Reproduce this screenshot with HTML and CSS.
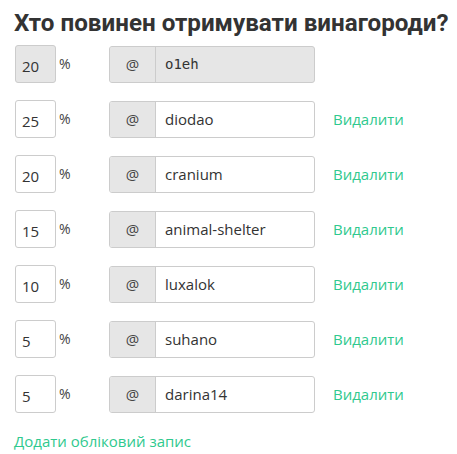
FILE: index.html
```html
<!DOCTYPE html>
<html>
<head>
<meta charset="utf-8">
<link rel="stylesheet" href="styles.css">
</head>
<body>
<div class="page">
  <h2 class="title">Хто повинен отримувати винагороди?</h2>
  <div class="rows">
    <div class="row">
      <input class="pct disabled" value="20" disabled>
      <span class="sign">%</span>
      <div class="group disabled">
        <span class="addon">@</span>
        <span class="name mono">o1eh</span>
      </div>
    </div>
    <div class="row">
      <input class="pct" value="25">
      <span class="sign">%</span>
      <div class="group">
        <span class="addon">@</span>
        <span class="name">diodao</span>
      </div>
      <a class="link del">Видалити</a>
    </div>
    <div class="row">
      <input class="pct" value="20">
      <span class="sign">%</span>
      <div class="group">
        <span class="addon">@</span>
        <span class="name">cranium</span>
      </div>
      <a class="link del">Видалити</a>
    </div>
    <div class="row">
      <input class="pct" value="15">
      <span class="sign">%</span>
      <div class="group">
        <span class="addon">@</span>
        <span class="name">animal-shelter</span>
      </div>
      <a class="link del">Видалити</a>
    </div>
    <div class="row">
      <input class="pct" value="10">
      <span class="sign">%</span>
      <div class="group">
        <span class="addon">@</span>
        <span class="name">luxalok</span>
      </div>
      <a class="link del">Видалити</a>
    </div>
    <div class="row">
      <input class="pct" value="5">
      <span class="sign">%</span>
      <div class="group">
        <span class="addon">@</span>
        <span class="name">suhano</span>
      </div>
      <a class="link del">Видалити</a>
    </div>
    <div class="row">
      <input class="pct" value="5">
      <span class="sign">%</span>
      <div class="group">
        <span class="addon">@</span>
        <span class="name">darina14</span>
      </div>
      <a class="link del">Видалити</a>
    </div>
  </div>
  <a class="link add">Додати обліковий запис</a>
</div>
</body>
</html>
```
FILE: styles.css
```css
* { box-sizing: border-box; }
body {
  margin: 0;
  background: #fff;
  font-family: "Open Sans", "Noto Sans", sans-serif;
  color: #333;
}
.page {
  padding: 8px 0 0 14px;
}
.title {
  margin: 0 0 7px 0;
  font-family: Roboto, "Open Sans", sans-serif;
  font-size: 24.2px;
  line-height: 30px;
  font-weight: 700;
  color: #333;
  white-space: nowrap;
}
.rows {
  display: flex;
  flex-direction: column;
  gap: 17px;
}
.row {
  display: flex;
  align-items: center;
  height: 38px;
}
.pct {
  width: 41px;
  height: 38px;
  margin-left: 1px;
  border: 1px solid #ccc;
  border-radius: 3px;
  padding: 4px 0 0 6px;
  font-family: "Open Sans", sans-serif;
  font-size: 15px;
  color: #333;
  background: #fff;
  outline: none;
}
.pct.disabled { background: #e6e6e6; }
.sign {
  align-self: flex-start;
  margin: 9px 0 0 3px;
  width: 50px;
  font-size: 14px;
  color: #444;
}
.group {
  display: flex;
  width: 206px;
  height: 37px;
  border: 1px solid #ccc;
  border-radius: 3px;
  overflow: hidden;
  background: #fff;
}
.group.disabled { background: #e6e6e6; }
.addon {
  width: 46px;
  display: flex;
  align-items: center;
  justify-content: center;
  background: #e6e6e6;
  border-right: 1px solid #ccc;
  font-size: 15px;
  color: #444;
}
.name {
  display: flex;
  align-items: center;
  padding-left: 9px;
  font-size: 15px;
  color: #333;
}
.name.mono {
  font-family: "DejaVu Sans Mono", monospace;
  font-size: 14px;
}
.link {
  color: #2fc98e;
  font-size: 15px;
  text-decoration: none;
}
.del { margin-left: 18px; }
.add {
  display: block;
  margin-top: 18px;
}
```
